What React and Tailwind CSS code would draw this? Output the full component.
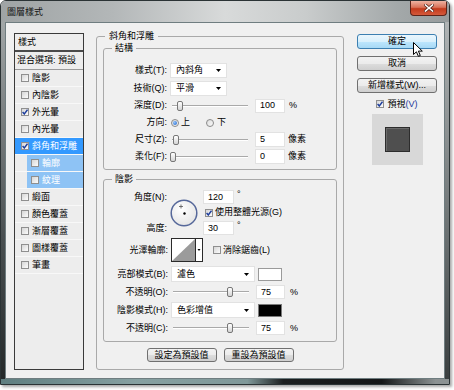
import React from "react";

function Check({ on }) {
  return (
    <span className="inline-flex h-[8px] w-[8px] shrink-0 items-center justify-center border border-[#8f8f8f] bg-[linear-gradient(135deg,#d6d6d6,#fcfcfc)]">
      {on && (
        <svg width="6" height="6" viewBox="0 0 6 6" className="block">
          <path d="M0.6 3 L2.3 5 L5.5 0.7" fill="none" stroke="#1b3c9c" strokeWidth="1.4" />
        </svg>
      )}
    </span>
  );
}

function Radio({ on }) {
  return (
    <span className="inline-flex h-[8px] w-[8px] shrink-0 items-center justify-center rounded-full border border-[#8a8a8a] bg-[linear-gradient(135deg,#dcdcdc,#fafafa)]">
      {on && <span className="h-[4px] w-[4px] rounded-full bg-[radial-gradient(circle_at_35%_35%,#8fc3ff,#1d5fc4)]" />}
    </span>
  );
}

function Arrow() {
  return (
    <svg width="5" height="3" viewBox="0 0 5 3" className="block">
      <path d="M0 0H5L2.5 3Z" fill="#000" />
    </svg>
  );
}

function Slider({ at }) {
  return (
    <div className="relative ml-[3px] h-[12px] w-[80px]">
      <div className="absolute left-[2px] right-[2px] top-[5px] h-[2px] border-t border-b border-t-[#a9a9a9] border-b-white" />
      <div
        className="absolute top-[1px] h-[10px] w-[6px] rounded-[2px] border border-[#777] bg-[linear-gradient(#ffffff,#d4d4d4)]"
        style={{ left: at }}
      />
    </div>
  );
}

const listItems = [
  { t: "陰影" },
  { t: "內陰影" },
  { t: "外光暈", c: true },
  { t: "內光暈" },
  { t: "斜角和浮雕", c: true, sel: true },
  { t: "輪廓", sub: true },
  { t: "紋理", sub: true },
  { t: "緞面" },
  { t: "顏色覆蓋" },
  { t: "漸層覆蓋" },
  { t: "圖樣覆蓋" },
  { t: "筆畫" },
];

function ListRow({ item }) {
  if (item.sub) {
    return (
      <div className="flex h-[17px] border-b border-[#f8f8f8]">
        <div className="w-[12px]" />
        <div className="flex flex-1 items-center gap-[3px] bg-[#8ec3f5] pl-[4px] text-white">
          <Check on={item.c} />
          <span>{item.t}</span>
        </div>
      </div>
    );
  }
  if (item.sel) {
    return (
      <div className="flex h-[17px] items-center gap-[3px] border-b border-[#f8f8f8] bg-[#3399ff] pl-[6px] text-white">
        <Check on={item.c} />
        <span>{item.t}</span>
      </div>
    );
  }
  return (
    <div className="flex h-[17px] items-center gap-[3px] border-b border-[#f8f8f8] pl-[6px]">
      <Check on={item.c} />
      <span>{item.t}</span>
    </div>
  );
}

export default function App() {
  return (
    <div className="relative h-[390px] w-[454px] overflow-hidden bg-white font-['Liberation_Sans','Noto_Sans_CJK_TC',sans-serif] text-[9px] leading-none text-black">
      <div className="flex h-[385px] w-[450px] flex-col overflow-hidden rounded-t-[6px] border border-[#2b3335] shadow-[2px_2px_3px_rgba(0,0,0,0.35)]">
        {/* title bar */}
        <div className="flex h-[21px] shrink-0 items-start justify-between bg-[linear-gradient(90deg,#9fa4a5_0%,#b3b7b8_25%,#d8dada_50%,#c9cccc_68%,#a4a9aa_88%,#979c9d_100%)]">
          <span className="ml-[6px] mt-[7px] text-[#151515]">圖層樣式</span>
          <div className="mr-[2px] flex h-[15px] w-[37px] items-center justify-center rounded-b-[4px] border border-t-0 border-[#5e2419] bg-[linear-gradient(#eeb3a2_0%,#d9735a_45%,#c33a1c_55%,#d45a3c_100%)]">
            <svg width="10" height="8" viewBox="0 0 10 8" className="block">
              <path d="M1.5 1 L8.5 7 M8.5 1 L1.5 7" stroke="#5a2a20" strokeWidth="3" strokeLinecap="square" />
              <path d="M1.5 1 L8.5 7 M8.5 1 L1.5 7" stroke="#ffffff" strokeWidth="1.6" strokeLinecap="square" />
            </svg>
          </div>
        </div>

        <div className="flex flex-1">
          <div className="w-[4px] bg-[linear-gradient(#a2a7a8,#4a5052_60%,#25292a)]" />
          {/* client */}
          <div className="flex flex-1 items-start border border-[#6f7d80] bg-[#f0f0f0]">
            {/* left list */}
            <div className="ml-[8px] mt-[10px] h-[337px] w-[70px] border border-[#3a3a3a] bg-[#ededed]">
              <div className="flex h-[18px] items-center border-b-2 border-[#4a4a4a] pl-[3px]">樣式</div>
              <div className="flex h-[18px] items-center border-b border-[#9a9a9a] pl-[2px]">混合選項: 預設</div>
              {listItems.map((it) => (
                <ListRow key={it.t} item={it} />
              ))}
            </div>

            {/* main group */}
            <fieldset className="ml-[12px] mt-[7px] w-[248px] rounded-[3px] border border-[#a9a9a9] pb-[7px]">
              <legend className="ml-[8px] px-[4px] leading-[12px]">斜角和浮雕</legend>

              {/* 結構 */}
              <fieldset className="mx-[6px] rounded-[3px] border border-[#a9a9a9] pb-[4px] pt-[7px]">
                <legend className="ml-[8px] px-[3px] leading-[12px]">結構</legend>
                <div className="flex h-[18px] items-center">
                  <span className="w-[63px] text-right">樣式(T):</span>
                  <div className="ml-[3px] flex h-[15px] w-[57px] items-center justify-between border border-[#e2e2e2] bg-white pl-[5px] pr-[5px]">
                    <span>內斜角</span>
                    <Arrow />
                  </div>
                </div>
                <div className="flex h-[18px] items-center">
                  <span className="w-[63px] text-right">技術(Q):</span>
                  <div className="ml-[3px] flex h-[15px] w-[57px] items-center justify-between border border-[#e2e2e2] bg-white pl-[5px] pr-[5px]">
                    <span>平滑</span>
                    <Arrow />
                  </div>
                </div>
                <div className="flex h-[17px] items-center">
                  <span className="w-[63px] text-right">深度(D):</span>
                  <Slider at={7} />
                  <div className="ml-[5px] flex h-[14px] w-[30px] items-center border border-[#e2e2e2] bg-white pl-[4px]">100</div>
                  <span className="ml-[4px]">%</span>
                </div>
                <div className="flex h-[17px] items-center">
                  <span className="w-[63px] text-right">方向:</span>
                  <span className="ml-[4px] flex items-center">
                    <Radio on />
                  </span>
                  <span className="ml-[2px]">上</span>
                  <span className="ml-[16px] flex items-center">
                    <Radio />
                  </span>
                  <span className="ml-[3px]">下</span>
                </div>
                <div className="flex h-[17px] items-center">
                  <span className="w-[63px] text-right">尺寸(Z):</span>
                  <Slider at={3} />
                  <div className="ml-[5px] flex h-[15px] w-[30px] items-center border border-[#e2e2e2] bg-white pl-[4px]">5</div>
                  <span className="ml-[3px]">像素</span>
                </div>
                <div className="flex h-[17px] items-center">
                  <span className="w-[63px] text-right">柔化(F):</span>
                  <Slider at={0} />
                  <div className="ml-[5px] flex h-[15px] w-[30px] items-center border border-[#e2e2e2] bg-white pl-[4px]">0</div>
                  <span className="ml-[3px]">像素</span>
                </div>
              </fieldset>

              {/* 陰影 */}
              <fieldset className="mx-[6px] mt-[3px] rounded-[3px] border border-[#a9a9a9] pb-[4px] pt-[5px]">
                <legend className="ml-[8px] px-[3px] leading-[12px]">陰影</legend>
                <div className="flex h-[45px] items-start">
                  <div className="flex h-[45px] w-[63px] flex-col justify-between">
                    <div className="flex h-[14px] items-center justify-end">角度(N):</div>
                    <div className="flex h-[14px] items-center justify-end">高度:</div>
                  </div>
                  <svg width="28" height="28" viewBox="0 0 28 28" className="ml-[3px] mt-[9px] block">
                    <defs>
                      <radialGradient id="dial" cx="0.4" cy="0.35" r="0.7">
                        <stop offset="0" stopColor="#ffffff" />
                        <stop offset="1" stopColor="#e4e4e4" />
                      </radialGradient>
                    </defs>
                    <circle cx="14" cy="14" r="12.8" fill="url(#dial)" stroke="#56689a" strokeWidth="1.5" />
                    <circle cx="14.5" cy="14.5" r="1.2" fill="#000" />
                    <path d="M11 5.5 V9.5 M9 7.5 H13" stroke="#555" strokeWidth="0.8" />
                  </svg>
                  <div className="ml-[5px] flex flex-col">
                    <div className="flex items-start">
                      <div className="flex h-[14px] w-[31px] items-center border border-[#e2e2e2] bg-white pl-[4px]">120</div>
                      <span className="ml-[3px]">°</span>
                    </div>
                    <div className="ml-[2px] mt-[2px] flex h-[13px] items-center gap-[2px]">
                      <Check on />
                      <span>使用整體光源(G)</span>
                    </div>
                    <div className="mt-[2px] flex items-start">
                      <div className="flex h-[14px] w-[31px] items-center border border-[#e2e2e2] bg-white pl-[4px]">30</div>
                      <span className="ml-[3px]">°</span>
                    </div>
                  </div>
                </div>

                <div className="mt-[3px] flex h-[24px] items-center">
                  <span className="w-[64px] text-right">光澤輪廓:</span>
                  <svg width="32" height="24" viewBox="0 0 32 24" className="ml-[3px] block">
                    <rect x="0.5" y="0.5" width="31" height="23" fill="#ffffff" stroke="#2a2a2a" />
                    <path d="M1 23 L24 1 L24 23 Z" fill="#9b9b9b" />
                    <line x1="24.5" y1="0" x2="24.5" y2="24" stroke="#2a2a2a" />
                    <path d="M26.5 11 L29.5 11 L28 13 Z" fill="#000" />
                  </svg>
                  <span className="ml-[10px] flex items-center gap-[2px]">
                    <Check />
                    <span>消除鋸齒(L)</span>
                  </span>
                </div>

                <div className="mt-[3px] flex h-[18px] items-center">
                  <span className="w-[64px] text-right">亮部模式(B):</span>
                  <div className="ml-[3px] flex h-[16px] w-[84px] items-center justify-between border border-[#e2e2e2] bg-white pl-[5px] pr-[5px]">
                    <span>濾色</span>
                    <Arrow />
                  </div>
                  <div className="ml-[3px] h-[13px] w-[24px] border border-[#9a9a9a] bg-white" />
                </div>
                <div className="flex h-[18px] items-center">
                  <span className="w-[64px] text-right">不透明(O):</span>
                  <Slider at={56} />
                  <div className="ml-[5px] flex h-[14px] w-[29px] items-center border border-[#e2e2e2] bg-white pl-[4px]">75</div>
                  <span className="ml-[5px]">%</span>
                </div>
                <div className="flex h-[18px] items-center">
                  <span className="w-[64px] text-right">陰影模式(H):</span>
                  <div className="ml-[3px] flex h-[16px] w-[84px] items-center justify-between border border-[#e2e2e2] bg-white pl-[5px] pr-[5px]">
                    <span>色彩增值</span>
                    <Arrow />
                  </div>
                  <div className="ml-[3px] h-[13px] w-[24px] border border-[#7a7a7a] bg-black" />
                </div>
                <div className="flex h-[18px] items-center">
                  <span className="w-[64px] text-right">不透明(C):</span>
                  <Slider at={56} />
                  <div className="ml-[5px] flex h-[14px] w-[29px] items-center border border-[#e2e2e2] bg-white pl-[4px]">75</div>
                  <span className="ml-[5px]">%</span>
                </div>
              </fieldset>

              <div className="mt-[6px] flex justify-center gap-[7px]">
                <div className="flex h-[14px] w-[70px] items-center justify-center rounded-[3px] border border-[#707070] bg-[linear-gradient(#f2f2f2_0%,#ebebeb_50%,#dddddd_51%,#cfcfcf_100%)]">設定為預設值</div>
                <div className="flex h-[14px] w-[70px] items-center justify-center rounded-[3px] border border-[#707070] bg-[linear-gradient(#f2f2f2_0%,#ebebeb_50%,#dddddd_51%,#cfcfcf_100%)]">重設為預設值</div>
              </div>
            </fieldset>

            {/* right column */}
            <div className="ml-[13px] mt-[11px] flex w-[80px] flex-col items-center">
              <div className="flex h-[15px] w-[80px] items-center justify-center rounded-[3px] border border-[#3c7fb1] bg-[linear-gradient(#eaf6fd_0%,#d9f0fc_50%,#bee6fd_51%,#a7d9f5_100%)]">確定</div>
              <div className="mt-[7px] flex h-[15px] w-[80px] items-center justify-center rounded-[3px] border border-[#707070] bg-[linear-gradient(#f2f2f2_0%,#ebebeb_50%,#dddddd_51%,#cfcfcf_100%)]">取消</div>
              <div className="mt-[7px] flex h-[15px] w-[80px] items-center justify-center rounded-[3px] border border-[#707070] bg-[linear-gradient(#f2f2f2_0%,#ebebeb_50%,#dddddd_51%,#cfcfcf_100%)]">新增樣式(W)...</div>
              <div className="mt-[6px] flex h-[10px] items-center gap-[3px]">
                <Check on />
                <span>
                  預視<span className="text-[#23369a]">(V)</span>
                </span>
              </div>
              <div className="mt-[5px] flex h-[51px] w-[51px] items-center justify-center bg-[#d8d8d8]">
                <div className="h-[25px] w-[25px] border border-[#2c2c2c] bg-[#4f4f4f] shadow-[inset_1px_1px_0_#6a6a6a]" />
              </div>
            </div>
          </div>
          <div className="w-[4px] bg-[linear-gradient(#b0b4b5,#6a7071_60%,#3a3f40)]" />
        </div>

        <div className="h-[5px] shrink-0 bg-[linear-gradient(90deg,#5f7e80_0%,#86a0a1_30%,#809899_55%,#1c1f20_63%,#151718_85%,#8c9293_97%)]" />
      </div>

      {/* mouse cursor */}
      <svg width="11" height="16" viewBox="0 0 11 16" className="absolute left-[413px] top-[42px] block">
        <path d="M0.5 0.5 L0.5 12.5 L3.4 9.8 L5.4 14.3 L7.3 13.5 L5.4 9.1 L9.3 9.1 Z" fill="#ffffff" stroke="#000" strokeWidth="1" strokeLinejoin="round" />
      </svg>
    </div>
  );
}
